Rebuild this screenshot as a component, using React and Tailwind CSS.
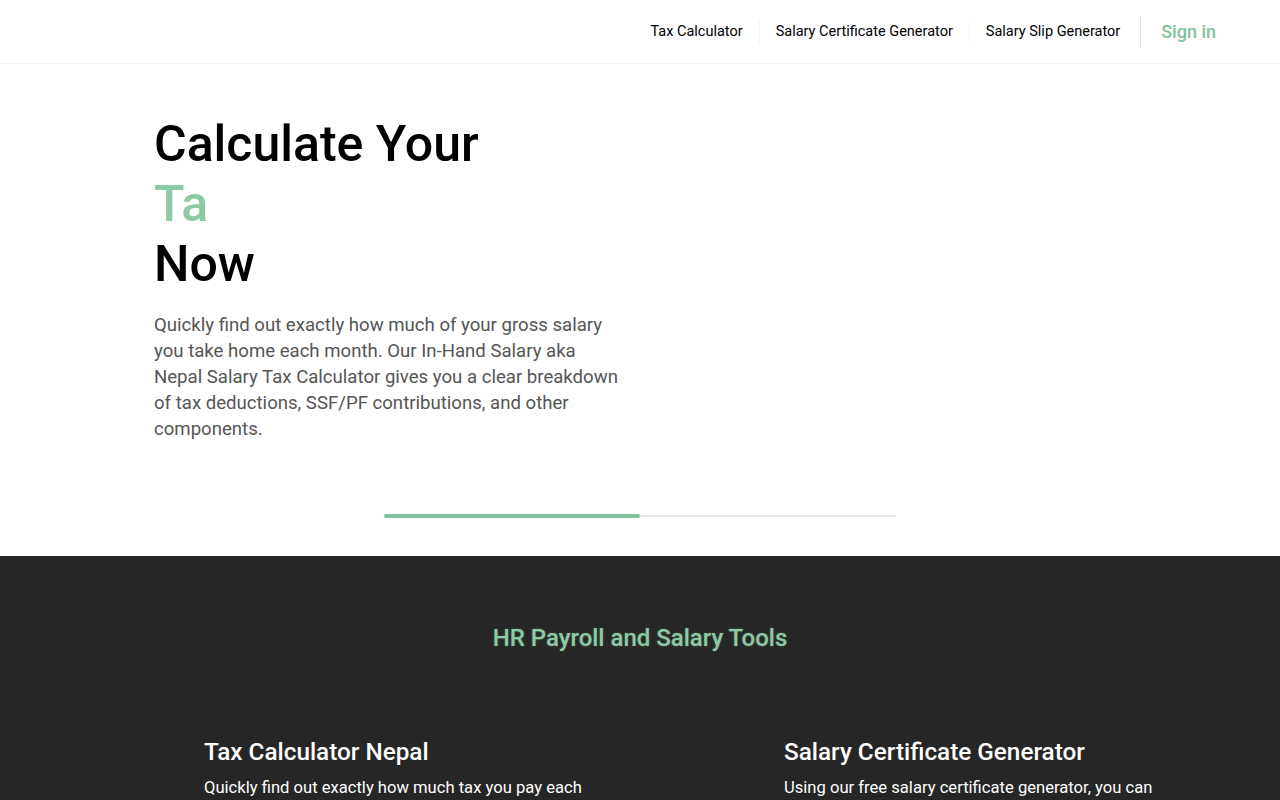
import React from "react";

const navLinks = ["Tax Calculator", "Salary Certificate Generator", "Salary Slip Generator"];

const tools = [
  {
    title: "Tax Calculator Nepal",
    text: "Quickly find out exactly how much tax you pay each month and what your in-hand salary will be.",
  },
  {
    title: "Salary Certificate Generator",
    text: "Using our free salary certificate generator, you can create a professional certificate in minutes.",
  },
];

const Header = () => (
  <header className="h-16 border-b border-gray-100 bg-white">
    <div className="flex h-full items-center justify-end px-16">
      <nav className="flex items-center pt-px">
        {navLinks.map((link, i) => (
          <a
            key={link}
            href="#"
            className={`px-4 text-[14.5px] text-black ${i > 0 ? "border-l border-gray-100" : ""}`}
          >
            {link}
          </a>
        ))}
        <div className="ml-1 flex h-8 items-center border-l border-gray-200 pl-5">
          <a href="#" className="text-lg font-medium text-[#7fc29b]">
            Sign in
          </a>
        </div>
      </nav>
    </div>
  </header>
);

const Hero = () => (
  <section className="bg-white">
    <div className="pl-[154px] pt-[50px]">
      <h1 className="text-[50px] font-medium leading-[60px] text-black">
        Calculate Your
        <br />
        <span className="text-[#8ccaa5]">Ta</span>
        <br />
        Now
      </h1>
      <p className="mt-[18px] w-[470px] text-[18.6px] leading-[26px] text-[#555]">
        Quickly find out exactly how much of your gross salary you take home each month. Our
        In-Hand Salary aka Nepal Salary Tax Calculator gives you a clear breakdown of tax
        deductions, SSF/PF contributions, and other components.
      </p>
    </div>
    <div className="flex justify-center pb-[38px] pt-[72px]">
      <div className="flex h-1 w-[512px] items-center">
        <div className="h-1 w-1/2 rounded-full bg-[#7fc29b]" />
        <div className="h-0.5 w-1/2 bg-gray-200" />
      </div>
    </div>
  </section>
);

const Tools = () => (
  <section className="bg-[#262626] pb-10 pt-[66px]">
    <h2 className="text-center text-2xl font-medium text-[#8ccaa5] [text-shadow:0_0_2px_rgba(140,202,165,0.4)]">
      HR Payroll and Salary Tools
    </h2>
    <div className="mx-auto mt-[82px] grid w-[1160px] grid-cols-2">
      {tools.map((tool) => (
        <div key={tool.title} className="pl-[144px] pr-8">
          <h3 className="text-[24.3px] font-medium leading-8 text-white">{tool.title}</h3>
          <p className="mt-2 w-[400px] text-[16.6px] leading-6 text-white">{tool.text}</p>
        </div>
      ))}
    </div>
  </section>
);

export default function App() {
  return (
    <div className="min-h-screen bg-white font-['Roboto',sans-serif]">
      <Header />
      <Hero />
      <Tools />
    </div>
  );
}
